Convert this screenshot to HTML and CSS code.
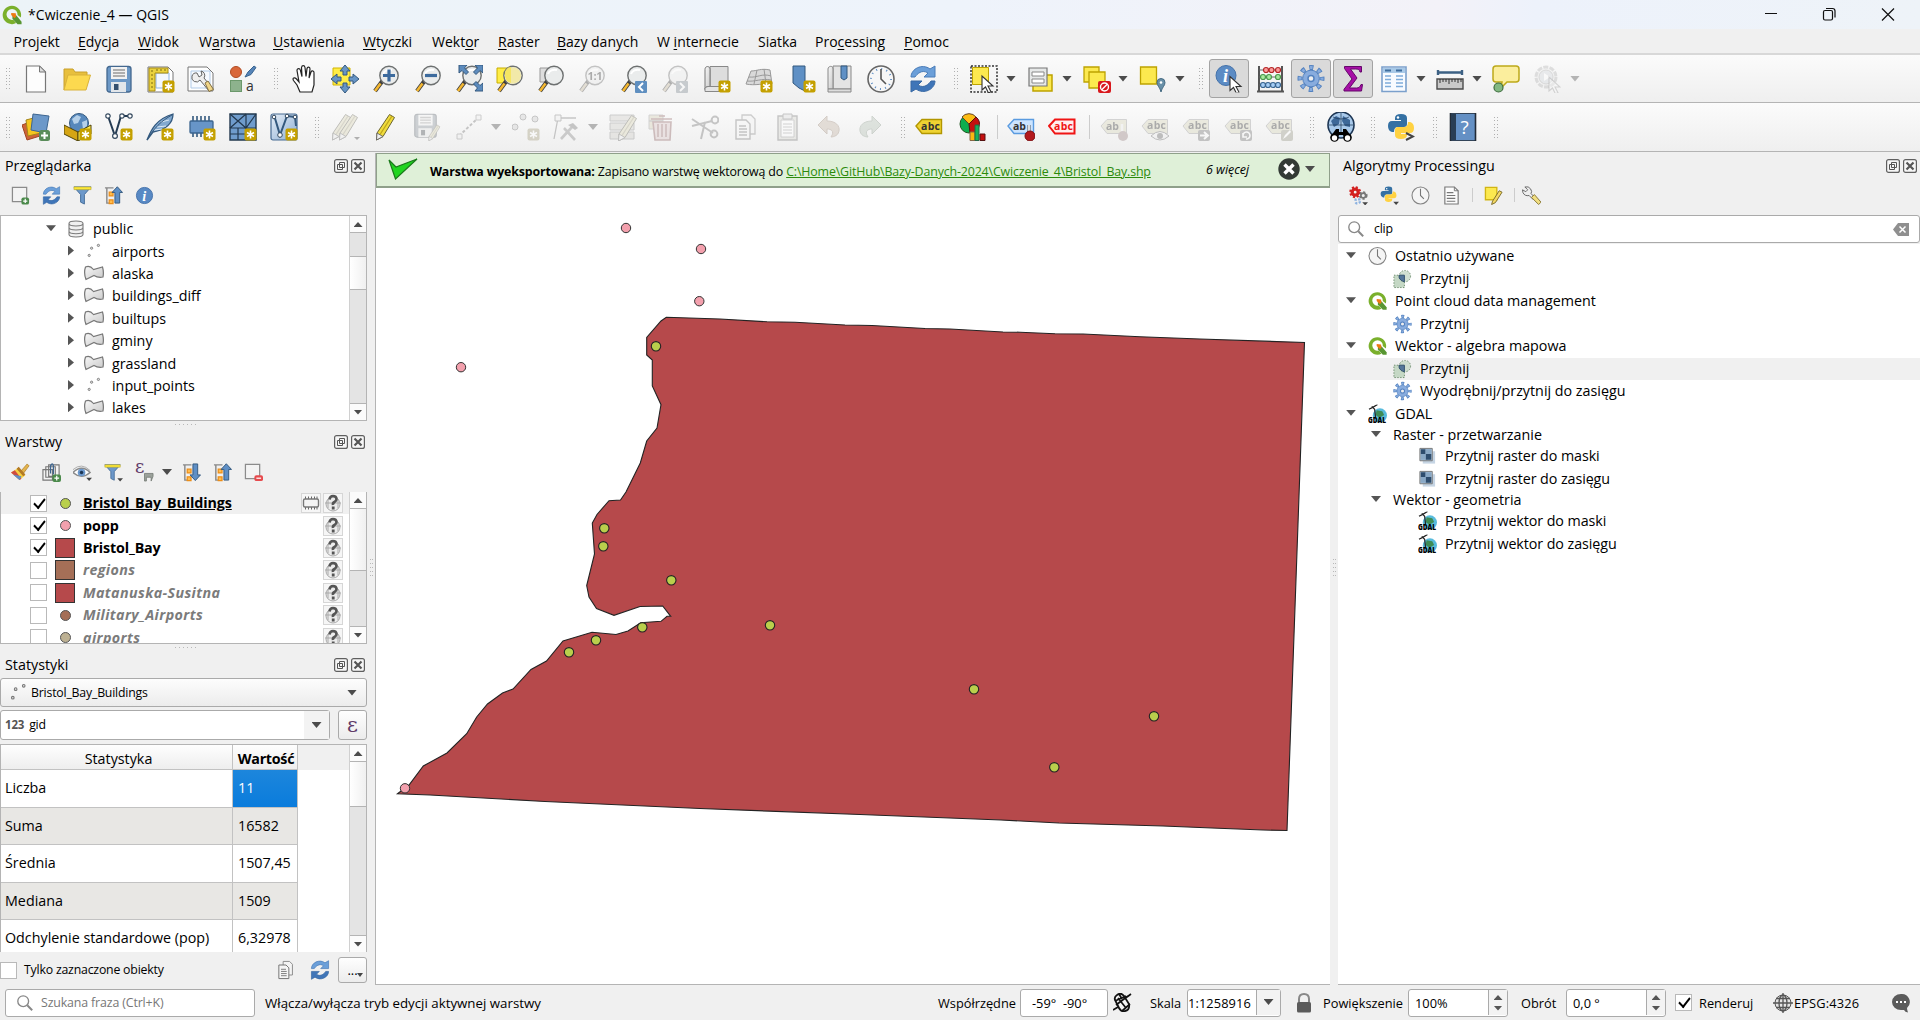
FILE: index.html
```html
<!DOCTYPE html>
<html lang="pl">
<head>
<meta charset="utf-8">
<title>*Cwiczenie_4 — QGIS</title>
<link rel="stylesheet" href="styles.css">
</head>
<body>
<svg width="0" height="0" class="defs">
<defs>
<linearGradient id="gg" x1="0" y1="0" x2="1" y2="1"><stop offset="0" stop-color="#f8f8f8"/><stop offset="1" stop-color="#c9c9c9"/></linearGradient>
<linearGradient id="gb" x1="0" y1="0" x2="1" y2="1"><stop offset="0" stop-color="#e6eef7"/><stop offset="1" stop-color="#8caed4"/></linearGradient>
<g id="bdg"><rect x="15.500" y="15.500" width="12" height="12" rx="2" fill="#c4a000"/><path d="M21.500 17.500v8M18 19.500l7 4M25 19.500l-7 4" stroke="#fff" stroke-width="1.600"/></g>
<g id="plus"><rect x="17" y="17" width="11" height="11" rx="2.500" fill="#5a8c5a"/><path d="M22.500 19v7M19 22.500h7" stroke="#fff" stroke-width="2"/></g>
<g id="handle"><path d="M11.500 14.500L3 26" stroke="#3f3f3f" stroke-width="4.200"/><path d="M8.500 18.500L3 26" stroke="#f5b831" stroke-width="2.600"/></g>
<g id="lens"><use href="#handle"/><circle cx="17" cy="10.500" r="9.200" fill="#eaecec" stroke="#6d7070" stroke-width="1.400"/><path d="M11 9a7 6 0 0 1 9-4" fill="none" stroke="#fff" stroke-width="2"/></g>
<g id="pencil"><path d="M5 20L17.500 1.500l5 3L11 23.500 4.500 27z" fill="#f0dc3c" stroke="#6b6430" stroke-width="1"/><path d="M8 21.500L20 3" stroke="#bfa51b" stroke-width="1.300"/><path d="M5 20l6 3.500-6.500 3.500z" fill="#eee" stroke="#666" stroke-width=".9"/></g>
<path id="tag" d="M1 13L7 6.500h19.500v14H7z"/>
<g id="cursor"><path d="M0 0v14l3.500-3 3 6 2.500-1.300-3-5.700h5z" fill="#fff" stroke="#333" stroke-width="1.100"/></g>
</defs>
<symbol id="q" viewBox="0 0 24 24"><path d="M12 1a11 11 0 1 0 5 20.700l-3.500-4A6.600 6.600 0 1 1 18.600 12l3.900 3A11 11 0 0 0 12 1z" fill="#7ab02c"/><path d="M12.500 12.500h4.800l6.200 7.500v3h-4.800l-6.200-6.500z" fill="#589632"/><path d="M11 9.500l5.500.5.500 4-2 2-4-4z" fill="#ee7913"/></symbol>
<symbol id="new" viewBox="0 0 28 28"><path d="M4.500 1h13l6 6v20h-19z" fill="#fdfdfd" stroke="#777" stroke-width="1.200"/><path d="M17.500 1v6h6z" fill="#ddd" stroke="#777"/></symbol>
<symbol id="open" viewBox="0 0 28 28"><path d="M1 25V4h9l2 3h12v4" fill="#e8bf3d" stroke="#c8a02c"/><path d="M1 25L5 10h22.500L23 25z" fill="#fcd94f" stroke="#d9b23a"/></symbol>
<symbol id="save" viewBox="0 0 28 28"><rect x="2" y="1.500" width="24" height="25.500" rx="2.500" fill="#6c98c6" stroke="#44688f" stroke-width="1.300"/><rect x="6" y="2" width="16" height="12" fill="#f2f2f2"/><path d="M8 5h12M8 8h12M8 11h12" stroke="#999" stroke-width="1.500"/><path d="M6 17h15v10H6z" fill="#e2e6ea"/><path d="M9 19h4.500v6H9z" fill="#34506f"/></symbol>
<symbol id="layout" viewBox="0 0 28 28"><path d="M1 2h20l5 5v20H1z" fill="#fff" stroke="#777"/><path d="M9 8h13v15H9z" fill="#f3f8ff" stroke="#8db5e3"/><path d="M2 3h19v5H8v18H2z" fill="#ead23f" stroke="#a78c14"/><path d="M4 6h2M4 10h2M4 14h2M4 18h2M4 22h2M10 4v2M14 4v2M18 4v2" stroke="#7d6c14"/><use href="#bdg"/></symbol>
<symbol id="mgr" viewBox="0 0 28 28"><path d="M1 2h19l6 6v18H1z" fill="#fff" stroke="#777"/><path d="M4 6h19v17H4z" fill="#f6faff" stroke="#b1cbe8"/><path d="M10 8a4.500 4.500 0 1 0 3 7l9 11 4-2-9-11a4.500 4.500 0 0 0-3-7l1 4-3 2z" fill="#eee" stroke="#555" stroke-width=".9"/><path d="M18 18l4 8.500 4.500-2L21 16z" fill="#f1d689" stroke="#847142"/></symbol>
<symbol id="style" viewBox="0 0 28 28"><circle cx="7" cy="7" r="5.500" fill="#d9673a" stroke="#b14b22"/><path d="M16 12l3-5 6-6 2 1.500-5 7z" fill="#5684b8" stroke="#39648f"/><rect x="1.500" y="15.500" width="11" height="11" fill="#8db28d" stroke="#6b986b"/></symbol>
<symbol id="hand" viewBox="0 0 28 28"><path d="M9 27L6 20 2.500 15.500c-1.500-2.500 1-3.500 3-1.500L8 17 6 5.500c0-2.500 3-2.500 3.500 0l1.500 6-.5-9c.5-2.500 3-2.500 3.500 0l1 9 1-8c.5-2 3-2 3 .5L18 13l2-6c1-2 3.500-1 3 1.500L23 20l-2 7z" fill="#fff" stroke="#222" stroke-width="1.200"/></symbol>
<symbol id="pan" viewBox="0 0 28 28"><path d="M2 3h17v17H2z" fill="#ffed46" stroke="#d2b500"/><path d="M14 0l5 6h-3v4h-4V6H9zM14 28l5-6h-3v-4h-4v4H9zM0 14l6-5v3h4v4H6v3zM28 14l-6-5v3h-4v4h4v3z" fill="#6795c5" stroke="#34597e"/></symbol>
<symbol id="zin" viewBox="0 0 28 28"><use href="#lens"/><path d="M17 4.500v12M11 10.500h12" stroke="#3c6a9d" stroke-width="3.200"/></symbol>
<symbol id="zout" viewBox="0 0 28 28"><use href="#lens"/><path d="M11 10.500h12" stroke="#3c6a9d" stroke-width="3.200"/></symbol>
<symbol id="zfull" viewBox="0 0 28 28"><use href="#lens"/><path d="M4 0h8L9.500 3l4 4-2.500 2.500-4-4L4 8zM28 0v8l-3-2.500-4 4L18.500 7l4-4L20 0zM28 26h-8l2.500-3-4-4 2.500-2.500 4 4L28 18z" fill="#5c8bbd" stroke="#34597e"/></symbol>
<symbol id="zsel" viewBox="0 0 28 28"><path d="M1 3h14v15H1z" fill="#ffed46" stroke="#c8ae00"/><use href="#lens"/><circle cx="17" cy="10.500" r="8.300" fill="#f2e9a8"/><path d="M9 7q2-5 6-5v16q-7-2-6-11z" fill="#f5e562"/></symbol>
<symbol id="zlay" viewBox="0 0 28 28"><path d="M3 3h13v14H3z" fill="#ddd" stroke="#999"/><use href="#lens"/></symbol>
<symbol id="z11" viewBox="0 0 28 28"><use href="#lens"/></symbol>
<symbol id="zprev" viewBox="0 0 28 28"><use href="#lens"/><rect x="15" y="16" width="12" height="12" rx="1" fill="#5f8fc0"/><path d="M23 18l-4 4 4 4" fill="none" stroke="#fff" stroke-width="2"/></symbol>
<symbol id="znext" viewBox="0 0 28 28"><use href="#lens"/><rect x="15" y="16" width="12" height="12" rx="1" fill="#5f8fc0"/><path d="M19 18l4 4-4 4" fill="none" stroke="#fff" stroke-width="2"/></symbol>
<symbol id="mapn" viewBox="0 0 28 28"><path d="M7 1.500h18v20H7z" fill="#ddd" stroke="#888"/><path d="M2 4.500c0-4 5-4 5 0v17H5c-2 0-3 1-3 3z" fill="url(#gg)" stroke="#777"/><path d="M2 26.500v-3q1-2 3-2h20v5z" fill="#e4e4e4" stroke="#888"/><use href="#bdg"/></symbol>
<symbol id="map3" viewBox="0 0 28 28"><path d="M1 19L6 6c6 0 10-3 19-1l2 14c-8-1-17 2-26 0zM4 12c8 1 13-4 22-1M12 5l-3 14M19 4l2 15M2 16c8 1 15-3 24-1" fill="#d9d9d9" stroke="#999"/><use href="#bdg"/></symbol>
<symbol id="bmn" viewBox="0 0 28 28"><path d="M5 1h12v25l-6-3-6-5z" fill="#5f90c5" stroke="#33597f"/><use href="#bdg"/></symbol>
<symbol id="bms" viewBox="0 0 28 28"><path d="M7 1h18v23H7z" fill="#e4e4e4" stroke="#888"/><path d="M2 4c0-3 5-4 5 0v20H2z" fill="url(#gg)" stroke="#888"/><path d="M2 24h23v3H2z" fill="#ddd" stroke="#888"/><path d="M15 1h6v12l-3 2-3-2z" fill="#5f90c5" stroke="#33597f"/></symbol>
<symbol id="clock" viewBox="0 0 28 28"><circle cx="14" cy="14" r="13" fill="#f7f7f7" stroke="#666" stroke-width="1.600"/><circle cx="14" cy="14" r="10" fill="none" stroke="#5c8cc4" stroke-width="2" stroke-dasharray="1 4.230"/><path d="M14 4v10l5 5" fill="none" stroke="#555" stroke-width="1.600"/></symbol>
<symbol id="clk2" viewBox="0 0 28 28"><circle cx="14" cy="14" r="12.500" fill="#f5f5f5" stroke="#858585" stroke-width="1.600"/><path d="M14 4v10l5 5" fill="none" stroke="#777" stroke-width="1.600"/></symbol>
<symbol id="ref" viewBox="0 0 28 28"><path d="M2 12C2 4 13-2 21 4l5-3v11H15l4-4C13 4 8 9 6 12z" fill="#6b9fd9" stroke="#4a7cb8"/><path d="M26 16c0 8-11 14-19 8l-5 3V16h11l-4 4c6 4 11-1 13-4z" fill="#3f75b8" stroke="#3869a4"/></symbol>
<symbol id="sel" viewBox="0 0 28 28"><path d="M1 1h26v26H1z" fill="none" stroke="#333" stroke-width="1.500" stroke-dasharray="2 1.500"/><path d="M2.500 2.500h16v17h-16z" fill="#fce94f" stroke="#bda300"/><use href="#cursor" x="12" y="11"/></symbol>
<symbol id="self" viewBox="0 0 28 28"><path d="M6 10h19v16H6z" fill="#fce94f" stroke="#bda300" stroke-width="1.500"/><path d="M2 3h18v18H2z" fill="#e6e8e8" stroke="#777" stroke-width="1.200"/><path d="M5 7h12v4H5zM5 14h12v4H5z" fill="#fff" stroke="#888"/></symbol>
<symbol id="desel" viewBox="0 0 28 28"><path d="M1 2h15v15H1z" fill="#fce94f" stroke="#bda300" stroke-width="1.300"/><path d="M6 7h16v16H6z" fill="#fce94f" stroke="#bda300" stroke-width="1.300"/><rect x="15" y="16" width="13" height="12" rx="2" fill="#d8181d"/><circle cx="21.500" cy="22" r="4" fill="none" stroke="#fff" stroke-width="1.400"/><path d="M18.500 25l6-6" stroke="#fff" stroke-width="1.400"/></symbol>
<symbol id="sloc" viewBox="0 0 28 28"><path d="M1.500 2h16v17h-16z" fill="#fce94f" stroke="#bda300" stroke-width="1.300"/><path d="M22 27c-1-5-4-6-4-9.500a4 4 0 0 1 8 0c0 3.500-3 4.500-4 9.500z" fill="#6990a8" stroke="#466b83"/><circle cx="22" cy="17.500" r="1.300" fill="#fff"/></symbol>
<symbol id="ident" viewBox="0 0 28 28"><circle cx="11" cy="11" r="10" fill="#5b8bc4" stroke="#4472aa"/></symbol>
<symbol id="abac" viewBox="0 0 28 28"><path d="M3 1v26M26 1v26M1 26.500h27" stroke="#555" stroke-width="2"/><path d="M3 5h23M3 12h23M3 20h23" stroke="#666"/><g stroke-width="1.200"><g fill="#fb9b9b" stroke="#b52626"><circle cx="10" cy="5" r="2.500"/><circle cx="15.500" cy="5" r="2.500"/><circle cx="22" cy="5" r="2.500"/></g><g fill="#a8eaa0" stroke="#4b994b"><circle cx="7" cy="12" r="2.500"/><circle cx="13" cy="12" r="2.500"/><circle cx="22" cy="12" r="2.500"/></g><g fill="#a5cdf5" stroke="#38648f"><circle cx="7" cy="20" r="2.500"/><circle cx="12" cy="20" r="2.500"/><circle cx="17" cy="20" r="2.500"/><circle cx="22" cy="20" r="2.500"/></g></g></symbol>
<symbol id="gear" viewBox="0 0 28 28"><circle cx="14" cy="14" r="11" fill="none" stroke="#5382c0" stroke-width="5" stroke-dasharray="4.200 4.440" stroke-dashoffset="2.100"/><circle cx="14" cy="14" r="11" fill="none" stroke="#88acde" stroke-width="3" stroke-dasharray="2.600 6.040" stroke-dashoffset="1.300"/><circle cx="14" cy="14" r="8.300" fill="#88acde" stroke="#5382c0"/><circle cx="14" cy="14" r="3" fill="#eee" stroke="#5382c0" stroke-width="1.500"/></symbol>
<symbol id="sig" viewBox="0 0 28 28"><path d="M5.500 2h17v5.500H21C20.500 5 19 4.500 16.500 4.500h-5L18 13.500l-7.500 10h7c2.500 0 3.500-1 4.500-3.500h1.500L22.500 26.500H5v-1.700L13 14.500 5.500 4z" fill="#a60fa6" stroke="#64086a"/></symbol>
<symbol id="tbl" viewBox="0 0 28 28"><path d="M2 2h24v24.500H2z" fill="#f8fbff" stroke="#7ba0cc" stroke-width="1.600"/><path d="M3 3h22v5H3z" fill="#a9cae8"/><path d="M5 5.500h6M16 5.500h6" stroke="#3e6d9d" stroke-width="2"/><path d="M5 11h6M5 14.500h6M5 18h6M5 21.500h6M16 11h7M16 14.500h7M16 18h7M16 21.500h7" stroke="#7eacda" stroke-width="1.500"/></symbol>
<symbol id="meas" viewBox="0 0 28 28"><path d="M3 7.500h22M2 5v5M26 5v5" stroke="#3d6184" stroke-width="2.400"/><path d="M1 14h26v10H1z" fill="#c9c9c9" stroke="#4c4c4c" stroke-width="1.400"/><path d="M4 14v4M7 14v3M10 14v3M13 14v5M16 14v3M19 14v3M22 14v4M25 14v3" stroke="#333"/></symbol>
<symbol id="tip" viewBox="0 0 28 28"><path d="M4 1h20q3 0 3 3v10q0 3-3 3h-9l-6 6 1-6H4q-3 0-3-3V4q0-3 3-3z" fill="#fbee9d" stroke="#bda91a" stroke-width="1.500"/><circle cx="6.500" cy="22.500" r="4.500" fill="#82b882" stroke="#3d6b3d" stroke-width="1.200"/></symbol>
<symbol id="act" viewBox="0 0 28 28"><circle cx="13" cy="12" r="10" fill="#ececec" stroke="#b5b5b5" stroke-width="3" stroke-dasharray="5 1.300"/><circle cx="13" cy="12" r="7" fill="#d2d6db" stroke="#aaa"/><path d="M11 8l6 4-6 4z" fill="#fff"/><use href="#cursor" x="16" y="12" opacity=".45"/></symbol>
<symbol id="ds" viewBox="0 0 28 28"><path d="M0 12l13-5 5 16-13 4z" fill="#ce6338" stroke="#a04623"/><path d="M4 7l15-4v17L6 23z" fill="#f5c61e" stroke="#a3851c"/><path d="M11 1l16 2-3 17-15-3z" fill="#6c98c9" stroke="#3d6590"/><use href="#plus"/></symbol>
<symbol id="gpk" viewBox="0 0 28 28"><circle cx="15" cy="10" r="9.500" fill="#5788bc" stroke="#33597f"/><path d="M8 6l5-4 4 2-3 6-4 1zM18 9l5-2v6l-4 3z" fill="#b5d0e9"/><path d="M0 12l14 7v9L0 21z" fill="#d5a514" stroke="#4e430a"/><path d="M14 19l13-7v9l-13 7z" fill="#ffe94a" stroke="#4e430a"/><use href="#bdg"/></symbol>
<symbol id="shp" viewBox="0 0 28 28"><path d="M3 3l7 20 6-20h8" fill="none" stroke="#243b53" stroke-width="2"/><g fill="#fff" stroke="#34495e" stroke-width="1.200"><circle cx="3" cy="3" r="2.200"/><circle cx="10" cy="23" r="2.400"/><circle cx="17" cy="3" r="2.200"/><circle cx="25" cy="3" r="2.200"/></g><use href="#bdg"/></symbol>
<symbol id="fea" viewBox="0 0 28 28"><path d="M1 27C5 17 10 6 27 1c0 9-7 16-20 18z" fill="#82a9d0" stroke="#34597e" stroke-width="1.300"/><path d="M11 14l9-1M15 9l8-2M8 17l8-1" stroke="#dce9f4" fill="none"/><path d="M1 27C8 15 15 8 26 2" stroke="#34597e" fill="none"/><use href="#bdg"/></symbol>
<symbol id="mem" viewBox="0 0 28 28"><path d="M5 3v21M9 3v21M13 3v21M17 3v21M21 3v21" stroke="#34597e" stroke-width="1.600"/><rect x="2" y="8" width="23" height="12" rx="1" fill="#6795c8" stroke="#3b648f" stroke-width="1.300"/><use href="#bdg"/></symbol>
<symbol id="mesh" viewBox="0 0 28 28"><path d="M1 1h26v26H1z" fill="#6f9ccc" stroke="#22384e" stroke-width="1.400"/><path d="M1 15h26M17 1v26M1 15L17 1M1 1l16 14L27 1M1 21h16M9 15v12" stroke="#22384e" stroke-width="1.200" fill="none"/><use href="#bdg"/></symbol>
<symbol id="vt" viewBox="0 0 28 28"><rect x="1" y="1" width="26" height="26" rx="2" fill="url(#gb)" stroke="#466a92" stroke-width="1.200"/><path d="M4 2l6 20 7-19 8 1 1 9" fill="none" stroke="#34597e" stroke-width="2"/><g fill="#fff" stroke="#34495e"><circle cx="4" cy="4" r="1.800"/><circle cx="10" cy="22" r="2.300"/><circle cx="17" cy="3" r="1.800"/><circle cx="25" cy="4" r="1.800"/></g><use href="#bdg"/></symbol>
<symbol id="pens" viewBox="0 0 28 28"><use href="#pencil" x="-4"/><use href="#pencil" x="3"/><path d="M22 24h6l-3 3z" fill="#444"/></symbol>
<symbol id="pen" viewBox="0 0 28 28"><use href="#pencil"/></symbol>
<symbol id="saved" viewBox="0 0 28 28"><use href="#save" width="25" height="25"/><g transform="translate(13 11) scale(.62)"><use href="#pencil"/></g></symbol>
<symbol id="line" viewBox="0 0 28 28"><path d="M4 23L24 4" stroke="#777" stroke-width="2" stroke-dasharray="3 2"/><path d="M2 21h5v5H2zM21 2h5v5h-5z" fill="#eee" stroke="#888"/></symbol>
<symbol id="pts" viewBox="0 0 28 28"><g fill="#ccc" stroke="#777"><circle cx="3" cy="14" r="3"/><circle cx="11" cy="4" r="3"/><circle cx="23" cy="6" r="3"/></g><use href="#bdg"/></symbol>
<symbol id="vert" viewBox="0 0 28 28"><path d="M6 5h18M6 5L2 26" stroke="#777" stroke-width="1.300"/><path d="M3 2h6v6H3z" fill="#eee" stroke="#777"/><path d="M9 26l11-12M12 15l11 12" stroke="#888" stroke-width="2.600"/><path d="M16 12l5-2 5 5-3 2z" fill="#777"/></symbol>
<symbol id="form" viewBox="0 0 28 28"><path d="M1 2h24v6H1zM1 10h24v7H1zM1 19h24v7H1z" fill="#d5cfb4" stroke="#888"/><g transform="translate(5 1)"><use href="#pencil"/></g></symbol>
<symbol id="del" viewBox="0 0 28 28"><path d="M1 2h14v6H1zM1 8h14v8H1z" fill="#d5cfb4" stroke="#999"/><path d="M5 9h18l-1 18H7zM3 6h21M11 3h6" fill="#d9c4c4" stroke="#8e6161" stroke-width="1.600"/><path d="M10 11v13M14 11v13M18 11v13" stroke="#8e6161" stroke-width="1.500"/></symbol>
<symbol id="cut" viewBox="0 0 28 28"><path d="M1 6l21 14M10 26L14 9" stroke="#777" stroke-width="2"/><path d="M1 13l20-5" stroke="#777" stroke-width="2"/><circle cx="24" cy="7" r="3.400" fill="none" stroke="#777" stroke-width="2"/><circle cx="23" cy="21" r="3.400" fill="none" stroke="#777" stroke-width="2"/></symbol>
<symbol id="copy" viewBox="0 0 28 28"><path d="M10 2h9l4 4v15H10z" fill="#f4f4f4" stroke="#888" stroke-width="1.300"/><path d="M4 7h10l4 4v15H4z" fill="#f6f6f6" stroke="#777" stroke-width="1.400"/><path d="M7 13h7M7 16h8M7 19h8M7 22h8" stroke="#777" stroke-width="1.300"/></symbol>
<symbol id="paste" viewBox="0 0 28 28"><path d="M4 3h19v24H4z" fill="#d6d6cf" stroke="#777" stroke-width="1.400"/><path d="M7 7h13v17H7z" fill="#fff" stroke="#999"/><path d="M9 1h9v5H9z" fill="#ddd" stroke="#777"/><path d="M9 11h9M9 14h9M9 17h9M9 20h9" stroke="#999"/></symbol>
<symbol id="undo" viewBox="0 0 28 28"><path d="M3 12l9-9v5c9 0 13 5 12 10-1 6-8 6-8 6 4-6 0-8-4-8v5z" fill="#c4b4a5" stroke="#9e8b7c"/></symbol>
<symbol id="redo" viewBox="0 0 28 28"><path d="M25 12l-9-9v5C7 8 3 13 4 18c1 6 8 6 8 6-4-6 0-8 4-8v5z" fill="#b6c2b6" stroke="#8f9c8f"/></symbol>
<symbol id="dia" viewBox="0 0 28 28"><circle cx="10" cy="11" r="9" fill="#0eae4e" stroke="#252"/><path d="M10 11L3 4a9 9 0 0 1 14 0z" fill="#fcbc13" stroke="#642"/><path d="M10 11l7-7a9 9 0 0 1-6 16z" fill="#c51010" stroke="#511"/><path d="M11 19h5v8.500h-5z" fill="#fbb710" stroke="#864"/><path d="M16 12h4v15.500h-4z" fill="#17b15c" stroke="#264"/><path d="M21 21h5v6.500h-5z" fill="#c51010" stroke="#511"/></symbol>
<symbol id="meta" viewBox="0 0 30 30"><circle cx="15" cy="13" r="13" fill="#a8c9ea" stroke="#1d3654" stroke-width="1.600"/><path d="M5 9l5-5 4 2-1 6-5 3zM17 4l7 4v7l-5-1-3-5z" fill="#3d6898"/><path d="M3 13h24M15 1v20M7 5q8 4 16 0" stroke="#1d3654" stroke-width=".7" fill="none"/><path d="M5 24l5-7h3v3h4v-3h3l5 7-6 3-2-4h-4l-2 4z"/><circle cx="8.500" cy="25.500" r="4.300"/><circle cx="21.500" cy="25.500" r="4.300"/><circle cx="8.500" cy="26" r="2.700" fill="#fff"/><circle cx="21.500" cy="26" r="2.700" fill="#fff"/></symbol>
<symbol id="py" viewBox="0 0 28 28"><path d="M8 5q0-4 6-4t6 4v6q0 3-3 3h-6q-4 0-4 5H5q-4-1-4-6t4-5h9V7H8z" fill="#3470a3"/><path d="M20 22q0 4-6 4t-6-4v-5q0-3 3-3h6q4 0 4-5h2q4 1 4 6t-4 5h-9v1h6z" fill="#ffd242"/><circle cx="11" cy="4.500" r="1.200" fill="#fff"/></symbol>
<symbol id="help" viewBox="0 0 28 28"><path d="M1.500 0h25v28h-25z" fill="#6490c4" stroke="#222b36" stroke-width="1.600"/><path d="M2 1h5v26H2z" fill="#293d53"/></symbol>
<symbol id="add" viewBox="0 0 20 20"><path d="M1.500 1.500h15v15h-15z" fill="#f3f3f3" stroke="#8b8b8b" stroke-width="1.300"/><rect x="11" y="12" width="8" height="7.500" rx="2" fill="#4b8a4b"/><path d="M15 13.500v4.500M12.800 15.800h4.400" stroke="#fff" stroke-width="1.300"/></symbol>
<symbol id="rem" viewBox="0 0 20 20"><path d="M1.500 1.500h15v15h-15z" fill="#f3f3f3" stroke="#8b8b8b" stroke-width="1.300"/><rect x="11" y="13" width="9" height="6" rx="2" fill="#e64a4d"/><path d="M13 16h5" stroke="#fff" stroke-width="1.300"/></symbol>
<symbol id="fil" viewBox="0 0 20 20"><path d="M1 1h18L12 9v10l-4-2V9z" fill="#6c98ca" stroke="#456d99"/><path d="M1 1h18v2.800H1z" fill="#fce838" stroke="#b4a120" stroke-width=".6"/></symbol>
<symbol id="fild" viewBox="0 0 20 20"><use href="#fil" width="18" height="20"/><path d="M14 16h6l-3 3.500z" fill="#444"/></symbol>
<symbol id="up" viewBox="0 0 20 20"><path d="M1 2h9M3 2v16h6" stroke="#888" stroke-width="1.500" fill="none"/><path d="M5.500 6.500h4v4h-4zM5.500 14.500h4v4h-4z" fill="#ffbd4e" stroke="#ed8e18" stroke-width="1.300"/><path d="M14 .8l5.500 6h-3V18h-5V6.800h-3z" fill="#5f8fc5" stroke="#34597e"/></symbol>
<symbol id="dn" viewBox="0 0 20 20"><path d="M1 2h9M3 2v16h6" stroke="#888" stroke-width="1.500" fill="none"/><path d="M5.500 6.500h4v4h-4zM5.500 14.500h4v4h-4z" fill="#ffbd4e" stroke="#ed8e18" stroke-width="1.300"/><path d="M14 18.500l5.500-6h-3V1h-5v11.500h-3z" fill="#5f8fc5" stroke="#34597e"/></symbol>
<symbol id="brush" viewBox="0 0 20 20"><path d="M0 10l8-5 7 8-6 5z" fill="#f7cf41"/><path d="M0 10l4-2.500 7 9L9 18z" fill="#cf4b41"/><path d="M2 12l9 2-2 4z" fill="#5f8fc5"/><path d="M10 9l7-8 2 2-6 8z" fill="#e3b44d" stroke="#a7761e" stroke-width=".7"/><path d="M7 5l7 8" stroke="#b37a24" stroke-width="3"/></symbol>
<symbol id="grp" viewBox="0 0 20 20"><path d="M1 7h10v11H1zM4 4h10v11H4zM7 2h11v12H7z" fill="#f3f3f3" stroke="#777" stroke-width="1.200"/><path d="M9 11V3q2-4 3 0v9" stroke="#3d6590" fill="none" stroke-width="1.300"/><rect x="11" y="12" width="9" height="8" rx="2" fill="#4b8a4b"/><path d="M15.500 13.500v5M13 16h5" stroke="#fff" stroke-width="1.300"/></symbol>
<symbol id="eye" viewBox="0 0 20 20"><path d="M0 10q9-9 18 0-9 8-18 0z" fill="#fff" stroke="#8a8a8a" stroke-width="1.500"/><path d="M0 7q9-8 18 1" fill="none" stroke="#aaa"/><circle cx="9" cy="10" r="4" fill="#6b98cc"/><circle cx="9" cy="10" r="1.800" fill="#1d3654"/><path d="M14 15.500h6l-3 3.500z" fill="#444"/></symbol>
<symbol id="float" viewBox="0 0 14 14"><rect x=".6" y=".6" width="12.800" height="12.800" rx="2" fill="#f6f6f6" stroke="#5f5f5f" stroke-width="1.200"/><path d="M5.500 3.500h5v5h-5zM3.500 5.500h5v5h-5z" fill="#f6f6f6" stroke="#555"/></symbol>
<symbol id="xx" viewBox="0 0 14 14"><rect x=".6" y=".6" width="12.800" height="12.800" rx="2" fill="#f6f6f6" stroke="#5f5f5f" stroke-width="1.200"/><path d="M3.500 3.500l7 7M10.500 3.500l-7 7" stroke="#555" stroke-width="2.200"/></symbol>
<symbol id="db" viewBox="0 0 18 18"><path d="M2 3.500v11q0 2.500 7 2.500t7-2.500v-11q0-2.500-7-2.500t-7 2.500q0 2.500 7 2.500t7-2.500M2 7.500q0 2.500 7 2.500t7-2.500M2 11.200q0 2.500 7 2.500t7-2.500" fill="#f0f0f0" stroke="#7b7b7b" stroke-width="1.100"/></symbol>
<symbol id="pt" viewBox="0 0 20 20"><g fill="#ddd" stroke="#777" stroke-width="1.100"><circle cx="4" cy="15.500" r="1.400"/><circle cx="7" cy="6.500" r="1.400"/><circle cx="15.500" cy="3" r="1.400"/></g></symbol>
<symbol id="pol" viewBox="0 0 20 16"><path d="M1.500 2q4.500-2 8 2.500l9-2.500q1.500 5 .5 10-5 1-9-1.500L2 14.500Q-.5 8 1.500 2z" fill="url(#gg)" stroke="#777" stroke-width="1.200"/></symbol>
<symbol id="gears" viewBox="0 0 20 20"><g fill="none" stroke-dasharray="2 1.770"><circle cx="6.500" cy="6.500" r="4.800" stroke="#d32020" stroke-width="3"/><circle cx="15" cy="10" r="3.300" stroke="#777" stroke-width="2.500"/><circle cx="9" cy="16" r="2.500" stroke="#8cb1e0" stroke-width="2.500"/></g><circle cx="6.500" cy="6.500" r="3.200" fill="none" stroke="#d32020" stroke-width="3.400"/><circle cx="15" cy="10" r="2.500" fill="none" stroke="#777" stroke-width="1.800"/><path d="M14 17h6l-3 3.500z" fill="#444"/></symbol>
<symbol id="pyd" viewBox="0 0 20 20"><use href="#py" width="18" height="18"/><path d="M14 16.500h6l-3 3.500z" fill="#444"/></symbol>
<symbol id="doc" viewBox="0 0 20 20"><path d="M3 1h10l4 4v14H3z" fill="#fcfcfc" stroke="#777" stroke-width="1.200"/><path d="M13 1v4h4" fill="none" stroke="#777"/><path d="M5 7h7M5 10h9M5 13h9M5 16h9" stroke="#777" stroke-width="1.200"/></symbol>
<symbol id="note" viewBox="0 0 20 20"><path d="M1.500 1.500h12v13h-12z" fill="#fce94f" stroke="#d1b514" stroke-width="1.400"/><path d="M9 16l7-11 3 1.500-7 11-4 2z" fill="#f3d763" stroke="#7b6d2a"/></symbol>
<symbol id="wr" viewBox="0 0 20 20"><path d="M3 1q4-1 6 2t.500 5l4 4-2 2-4-4Q3 11 1 7l-.500-3 3.500 2 2-2z" fill="#eee" stroke="#666"/><path d="M10 12l3-3 7 8-2.500 2.500z" fill="#f2df82" stroke="#887735"/></symbol>
<symbol id="mag" viewBox="0 0 20 20"><circle cx="8" cy="8" r="6" fill="none" stroke="#888" stroke-width="1.500"/><path d="M12.500 12.500L18 18" stroke="#888" stroke-width="2.200"/></symbol>
<symbol id="clip" viewBox="0 0 20 20"><path d="M1 6h11v13H1z" fill="#c5d8c5" stroke="#6f8d6f" stroke-dasharray="1.500 1.500"/><circle cx="12.500" cy="7" r="6" fill="#c5d8c5" fill-opacity=".8" stroke="#6f8d6f" stroke-dasharray="1.500 1.500"/><path d="M6.500 6H12v7q-4-1-5.500-4z" fill="#55779a" stroke="#31506f"/></symbol>
<symbol id="gdal" viewBox="0 0 20 20"><circle cx="12.500" cy="11.500" r="7.500" fill="#58bbdc"/><path d="M9 6l6 1 2 4-5 3-4-3z" fill="#3e8b55"/><path d="M1 5l4-2 5-3M4 2l3 3 1 9" stroke="#222" stroke-width="1.300" fill="none"/></symbol>
<symbol id="ras" viewBox="0 0 20 20"><path d="M5 5h13v13H5z" fill="#c6d5e4"/><path d="M2 2h13v13H2z" fill="#a9c1d8" stroke="#777"/><path d="M3 3h5v5H3zM8 8h6v6H8z" fill="#2e4d6e"/><path d="M8 3h6v5H8zM3 8h5v6H3z" fill="#8aa9c6"/></symbol>
<symbol id="crs" viewBox="0 0 20 20"><rect x=".5" y=".5" width="19" height="19" fill="#f6f6f6" stroke="#d6d6d6"/><circle cx="10" cy="11" r="7" fill="#ececec" stroke="#aaa"/><path d="M2 10h16M5 6v9M15 6v9" stroke="#aaa"/><path d="M6.500 6.500Q7 3 10 3q3.500 0 3.500 3 0 2-2 3t-1.500 3" fill="none" stroke="#555" stroke-width="2.600"/><path d="M8.800 13.500h2.800v3H8.800z" fill="#555"/></symbol>
<symbol id="chip" viewBox="0 0 20 20"><rect x=".5" y=".5" width="19" height="19" fill="#f6f6f6" stroke="#d6d6d6"/><path d="M4.500 3.500v13M7.500 3.500v13M10.500 3.500v13M13.500 3.500v13M16 3.500v13" stroke="#666"/><rect x="2.500" y="6" width="15" height="8" rx="1.500" fill="#f4f4f4" stroke="#777" stroke-width="1.400"/></symbol>
<symbol id="ok" viewBox="0 0 30 22"><path d="M1 2l7 7L29 1 7.500 21z" fill="#20d520" stroke="#1a7a1a" stroke-width="1.200"/></symbol>
<symbol id="lock" viewBox="0 0 18 20"><path d="M4 9V6q0-5 5-5t5 5v3" fill="none" stroke="#888" stroke-width="2"/><rect x="2" y="9" width="14" height="10.500" rx="1.500" fill="#5b5b5b"/></symbol>
<symbol id="mouse" viewBox="0 0 20 20"><path d="M4 2q4-3 7 1l5 8q1 6-4 7-4 1-6-3L2 7q-1-3 2-5z" fill="#f4f4f4" stroke="#111" stroke-width="1.800"/><path d="M2 8l11-5M6 1l3 5M3 12l12-9M14 4l4-3M5 5l8 10M0 17l5-3M9 18l8-7" stroke="#111" stroke-width="1.700"/></symbol>
<symbol id="globe" viewBox="0 0 20 20"><circle cx="10" cy="10" r="8" fill="#e4e4e4" stroke="#555"/><ellipse cx="10" cy="10" rx="4" ry="8" fill="none" stroke="#555" stroke-width="1.300"/><path d="M0 10h20M10 0v20M3 5.500h14M3 14.500h14" stroke="#555" stroke-width="1.300"/></symbol>
<symbol id="chat" viewBox="0 0 20 20"><path d="M10 1a9 8 0 0 0 0 16h3q1 2 4 2.500-1-3-1-4.500A8 8 0 0 0 10 1z" fill="#5b5b5b"/><path d="M5 9h2M9 9h2M13 9h2" stroke="#fff" stroke-width="2"/></symbol>
</svg>

<header class="title"><svg class="i20"><use href="#q"/></svg><span class="tt">*Cwiczenie_4 — QGIS</span>
<svg class="win" viewBox="0 0 150 29"><g fill="none" stroke="#111" stroke-width="1.200"><path d="M19 13.500h12M136 8.500l12 12M148 8.500l-12 12"/><rect x="77.500" y="10.500" width="9" height="9.500" rx="1.500"/><path d="M80 8.500h6.500q2.500 0 2.500 2.500v6.500"/></g></svg></header>
<nav class="menu"><span>Pro<u>j</u>ekt</span><span><u>E</u>dycja</span><span><u>W</u>idok</span><span>W<u>a</u>rstwa</span><span><u>U</u>stawienia</span><span><u>W</u>tyczki</span><span>Wekt<u>o</u>r</span><span><u>R</u>aster</span><span><u>B</u>azy danych</span><span>W <u>i</u>nternecie</span><span>Siatka</span><span>Pro<u>c</u>essing</span><span><u>P</u>omoc</span></nav>
<div class="bar one">
<i class="h"></i><svg><use href="#new"/></svg><svg><use href="#open"/></svg><svg><use href="#save"/></svg><svg><use href="#layout"/></svg><svg><use href="#mgr"/></svg><svg viewBox="0 0 28 28"><use href="#style"/><text x="17" y="26" font-size="14" class="svgt">a</text></svg><i class="h"></i><svg><use href="#hand"/></svg><svg><use href="#pan"/></svg><svg><use href="#zin"/></svg><svg><use href="#zout"/></svg><svg><use href="#zfull"/></svg><svg><use href="#zsel"/></svg><svg><use href="#zlay"/></svg><svg class="off gr" viewBox="0 0 28 28"><use href="#z11"/><text x="9.500" y="15" font-size="11" font-weight="bold" textLength="15" class="svgt">1:1</text></svg><svg><use href="#zprev"/></svg><svg class="off gr"><use href="#znext"/></svg><svg><use href="#mapn"/></svg><svg><use href="#map3"/></svg><svg><use href="#bmn"/></svg><svg><use href="#bms"/></svg><svg><use href="#clock"/></svg><svg><use href="#ref"/></svg><i class="h"></i><svg><use href="#sel"/></svg><i class="a"></i><svg><use href="#self"/></svg><i class="a"></i><svg><use href="#desel"/></svg><i class="a"></i><svg><use href="#sloc"/></svg><i class="a"></i><i class="h"></i><svg class="on" viewBox="0 0 28 28"><use href="#ident"/><text x="8" y="17.500" font-size="18" class="ital">i</text><use href="#cursor" x="15" y="12"/></svg><svg><use href="#abac"/></svg><svg class="on"><use href="#gear"/></svg><svg class="on"><use href="#sig"/></svg><svg><use href="#tbl"/></svg><i class="a"></i><svg><use href="#meas"/></svg><i class="a"></i><svg><use href="#tip"/></svg><svg class="off"><use href="#act"/></svg><i class="a off"></i>
</div>
<div class="bar two">
<i class="h"></i><svg><use href="#ds"/></svg><svg><use href="#gpk"/></svg><svg><use href="#shp"/></svg><svg><use href="#fea"/></svg><svg><use href="#mem"/></svg><svg><use href="#mesh"/></svg><svg><use href="#vt"/></svg><i class="h"></i><svg class="off gr"><use href="#pens"/></svg><svg><use href="#pen"/></svg><svg class="off gr"><use href="#saved"/></svg><svg class="off gr"><use href="#line"/></svg><i class="a off"></i><svg class="off gr"><use href="#pts"/></svg><svg class="off gr"><use href="#vert"/></svg><i class="a off"></i><svg class="off gr"><use href="#form"/></svg><svg class="off"><use href="#del"/></svg><svg class="off"><use href="#cut"/></svg><svg class="off"><use href="#copy"/></svg><svg class="off"><use href="#paste"/></svg><svg class="off"><use href="#undo"/></svg><svg class="off"><use href="#redo"/></svg><i class="h"></i>
<svg viewBox="0 0 28 28"><use href="#tag" fill="#efd332" stroke="#b29600" stroke-width="1.400"/><text x="6" y="17" font-size="10.500" font-weight="bold" textLength="19" class="svgt">abc</text></svg><svg><use href="#dia"/></svg><i class="s"></i>
<svg viewBox="0 0 28 28"><use href="#tag" fill="#cce4ff" stroke="#5a9be0" stroke-width="1.400"/><text x="6" y="17" font-size="10.500" font-weight="bold" class="svgt">ab</text><path d="M22 22V12" stroke="#555" stroke-width="3"/><path d="M22 22V12" stroke="#eee" stroke-width="1.800"/><circle cx="23" cy="23" r="5" fill="#b3191e" stroke="#7a1013"/></svg>
<svg viewBox="0 0 28 28"><use href="#tag" fill="#fee" stroke="#f01515" stroke-width="2"/><text x="6" y="17" font-size="10.500" font-weight="bold" textLength="19" class="svgt red">abc</text></svg><i class="s"></i>
<svg class="off" viewBox="0 0 28 28"><use href="#tag" fill="#d7d5b9" stroke="#999"/><text x="6" y="17" font-size="10.500" font-weight="bold" class="svgt">ab</text><path d="M22 20v-9" stroke="#eee" stroke-width="2.500"/><circle cx="23" cy="23" r="5" fill="#9b8585"/></svg>
<svg class="off" viewBox="0 0 28 28"><use href="#tag" fill="#d7d5b9" stroke="#999"/><text x="6" y="16" font-size="10.500" font-weight="bold" textLength="19" class="svgt">abc</text><path d="M10 23q9-9 18 0-9 8-18 0z" fill="#eee" stroke="#666"/><circle cx="19" cy="23" r="3" fill="#666"/></svg>
<svg class="off" viewBox="0 0 28 28"><use href="#tag" fill="#d7d5b9" stroke="#999"/><text x="6" y="16" font-size="10.500" font-weight="bold" textLength="19" class="svgt">abc</text><rect x="16" y="17" width="12" height="11" rx="2" fill="#777"/><path d="M18 22.500h7M22 19l4 3.500-4 3.500" stroke="#fff" stroke-width="2" fill="none"/></svg>
<svg class="off" viewBox="0 0 28 28"><use href="#tag" fill="#d7d5b9" stroke="#999"/><text x="6" y="16" font-size="10.500" font-weight="bold" textLength="19" class="svgt">abc</text><rect x="16" y="17" width="12" height="11" rx="2" fill="#777"/><path d="M19 23a3.500 3.500 0 1 1 3 3M19 20v4h4" stroke="#fff" stroke-width="1.600" fill="none"/></svg>
<svg class="off" viewBox="0 0 28 28"><use href="#tag" fill="#d7d5b9" stroke="#999"/><text x="6" y="16" font-size="10.500" font-weight="bold" textLength="19" class="svgt">abc</text><rect x="16" y="17" width="12" height="11" rx="2" fill="#998"/><path d="M18 26l2-4 5-5 1 2-5 5z" fill="#fff"/></svg>
<i class="h"></i><svg class="big"><use href="#meta"/></svg><i class="h"></i><svg viewBox="0 0 28 28"><use href="#py"/><path d="M19 20l7 3.500-7 3.500" fill="none" stroke="#444" stroke-width="2"/></svg><i class="h"></i><svg viewBox="0 0 28 28"><use href="#help"/><text x="11.500" y="21" font-size="19" class="svgt wh">?</text></svg><i class="h"></i>
</div>

<main>
<aside class="left">
<section class="browser">
<h2><span>Przeglądarka</span><svg><use href="#float"/></svg><svg><use href="#xx"/></svg></h2>
<div class="tools"><svg><use href="#add"/></svg><svg><use href="#ref"/></svg><svg><use href="#fil"/></svg><svg><use href="#up"/></svg><svg viewBox="0 0 20 20"><circle cx="10" cy="10" r="8.500" fill="#5889c4" stroke="#4472ab"/><text x="7.500" y="15.500" font-size="15" class="ital">i</text></svg></div>
<div class="box">
<div class="rows">
<p class="root"><b class="ar dn"></b><svg><use href="#db"/></svg>public</p>
<p><b class="ar"></b><svg><use href="#pt"/></svg>airports</p>
<p><b class="ar"></b><svg><use href="#pol"/></svg>alaska</p>
<p><b class="ar"></b><svg><use href="#pol"/></svg>buildings_diff</p>
<p><b class="ar"></b><svg><use href="#pol"/></svg>builtups</p>
<p><b class="ar"></b><svg><use href="#pol"/></svg>gminy</p>
<p><b class="ar"></b><svg><use href="#pol"/></svg>grassland</p>
<p><b class="ar"></b><svg><use href="#pt"/></svg>input_points</p>
<p><b class="ar"></b><svg><use href="#pol"/></svg>lakes</p>
</div>
<div class="sb s1"><i class="up"></i><i class="thumb"></i><i class="down"></i></div>
</div>
</section>
<div class="split"></div>
<section class="layers">
<h2><span>Warstwy</span><svg><use href="#float"/></svg><svg><use href="#xx"/></svg></h2>
<div class="tools lt"><svg><use href="#brush"/></svg><svg><use href="#grp"/></svg><svg><use href="#eye"/></svg><svg><use href="#fild"/></svg><svg viewBox="0 0 20 20"><text x="0" y="11" font-size="19" class="eps">ε</text><path d="M10 11h9v3l-2 5v-4h-5v4h-2z" fill="#9ba19b" stroke="#6f756f" stroke-width=".8"/></svg><i class="a"></i><svg><use href="#dn"/></svg><svg><use href="#up"/></svg><svg><use href="#rem"/></svg></div>
<div class="box">
<div class="rows">
<p class="cur"><i class="cb ck"></i><i class="dot lime"></i><span class="act">Bristol_Bay_Buildings</span><svg><use href="#chip"/></svg><svg><use href="#crs"/></svg></p>
<p><i class="cb ck"></i><i class="dot pink"></i><span>popp</span><svg><use href="#crs"/></svg></p>
<p><i class="cb ck"></i><i class="sw red"></i><span>Bristol_Bay</span><svg><use href="#crs"/></svg></p>
<p class="hid"><i class="cb"></i><i class="sw brown"></i><span>regions</span><svg><use href="#crs"/></svg></p>
<p class="hid"><i class="cb"></i><i class="sw red"></i><span>Matanuska-Susitna</span><svg><use href="#crs"/></svg></p>
<p class="hid"><i class="cb"></i><i class="dot brown"></i><span>Military_Airports</span><svg><use href="#crs"/></svg></p>
<p class="hid"><i class="cb"></i><i class="dot tan"></i><span>airports</span><svg><use href="#crs"/></svg></p>
</div>
<div class="sb s2"><i class="up"></i><i class="thumb"></i><i class="down"></i></div>
</div>
</section>
<div class="split"></div>
<section class="stats">
<h2><span>Statystyki</span><svg><use href="#float"/></svg><svg><use href="#xx"/></svg></h2>
<div class="combo"><svg><use href="#pt"/></svg><span>Bristol_Bay_Buildings</span><i class="a"></i></div>
<div class="field"><div class="edit"><strong>123</strong><span>gid</span><i class="a"></i></div><button class="ebtn">ε</button></div>
<div class="tblbox">
<div class="table"><b>Statystyka</b><b class="v">Wartość</b>
<span>Liczba</span><span class="v selv">11</span>
<span class="alt">Suma</span><span class="v alt">16582</span>
<span>Średnia</span><span class="v">1507,45</span>
<span class="alt">Mediana</span><span class="v alt">1509</span>
<span>Odchylenie standardowe (pop)</span><span class="v">6,32978</span></div>
<div class="sb s3"><i class="up"></i><i class="thumb"></i><i class="down"></i></div>
</div>
<div class="foot"><i class="cb"></i><span>Tylko zaznaczone obiekty</span><svg><use href="#copy"/></svg><svg><use href="#ref"/></svg><button>...<i></i></button></div>
</section>
</aside>
<div class="vs"></div>
<div class="canvas">
<div class="msg"><svg><use href="#ok"/></svg><span class="mt"><b>Warstwa wyeksportowana:</b> Zapisano warstwę wektorową do <u>C:\Home\GitHub\Bazy-Danych-2024\Cwiczenie_4\Bristol_Bay.shp</u></span><em>6 więcej</em><svg class="cl" viewBox="0 0 22 22"><circle cx="11" cy="11" r="10.700" fill="#333a35"/><path d="M6.500 6.500l9 9M15.500 6.500l-9 9" stroke="#fff" stroke-width="3.400"/></svg><i class="a"></i></div>
<svg class="map" viewBox="376 188 954 795">
<path d="M397.500 793.700L409 785 423.300 766 447 753 466.700 733.700 476.700 717 487.500 704 502.500 693 513 689 531 669.500 546.500 661 563 641 592 632.300 616 634.500 628 631 640.700 622.700 661 621.300 667 616.300 670.700 616.300 662.700 606 640 606.500 614 615.300 596.500 608.500 589 597 586.700 585.500 594.500 554 592.300 523 597 514.500 609 500.700 620.500 500 626 492 640.300 463 646.700 441 657 428 661 404.700 652.300 386 652.300 360 646.700 355 646.700 337.500 661 321 666.300 317.200 720 319 767 321.800 795 322.300 845 325 872 325.500 925 328.500 950 329 1003 332 1020 332.200 1055 333.700 1083 334 1140 336.800 1200 339 1304.500 342.500 1287 830.500 1263 830 1212 828 1163 826 1059 823 1001 820 860 814.500 700 808.500 545 801.500 430 795z" fill="#b6494b" stroke="#232323" stroke-width="1.100"/>
<g fill="#f3a0ad" stroke="#333" stroke-width="1"><circle cx="626" cy="228" r="4.700"/><circle cx="701" cy="249" r="4.700"/><circle cx="699.300" cy="301.200" r="4.700"/><circle cx="461" cy="367.200" r="4.700"/><circle cx="405" cy="788.300" r="4.700"/></g>
<g fill="#b9cf4c" stroke="#232323" stroke-width="1.100"><circle cx="656" cy="346.300" r="4.700"/><circle cx="604.300" cy="528.300" r="4.700"/><circle cx="603.300" cy="546.300" r="4.700"/><circle cx="671.300" cy="580.300" r="4.700"/><circle cx="770" cy="625.300" r="4.700"/><circle cx="642.300" cy="627.300" r="4.700"/><circle cx="596" cy="640.300" r="4.700"/><circle cx="569" cy="652.300" r="4.700"/><circle cx="974" cy="689.300" r="4.700"/><circle cx="1154" cy="716.300" r="4.700"/><circle cx="1054.300" cy="767.300" r="4.700"/></g>
</svg>
</div>
<div class="vs"></div>
<aside class="right">
<h2><span>Algorytmy Processingu</span><svg><use href="#float"/></svg><svg><use href="#xx"/></svg></h2>
<div class="tools rt"><svg><use href="#gears"/></svg><svg><use href="#pyd"/></svg><svg><use href="#clk2"/></svg><svg><use href="#doc"/></svg><i class="s"></i><svg><use href="#note"/></svg><i class="s"></i><svg><use href="#wr"/></svg></div>
<div class="search"><svg class="i18"><use href="#mag"/></svg><span>clip</span><svg class="clr" viewBox="0 0 16 13"><path d="M0 6.500L5 0h11v13H5z" fill="#8f8f8f"/><path d="M6.500 3.500l6 6M12.500 3.500l-6 6" stroke="#fff" stroke-width="1.500"/></svg></div>
<div class="algs">
<p><b class="ar dn"></b><svg><use href="#clk2"/></svg>Ostatnio używane</p>
<p class="l1"><svg><use href="#clip"/></svg>Przytnij</p>
<p><b class="ar dn"></b><svg><use href="#q"/></svg>Point cloud data management</p>
<p class="l1"><svg><use href="#gear"/></svg>Przytnij</p>
<p><b class="ar dn"></b><svg><use href="#q"/></svg>Wektor - algebra mapowa</p>
<p class="l1 cur"><svg><use href="#clip"/></svg>Przytnij</p>
<p class="l1"><svg><use href="#gear"/></svg>Wyodrębnij/przytnij do zasięgu</p>
<p><b class="ar dn"></b><svg viewBox="0 0 20 20"><use href="#gdal"/><text x="0" y="19.500" font-size="9.500" textLength="19" lengthAdjust="spacingAndGlyphs" class="svgt gd">GDAL</text></svg>GDAL</p>
<p class="cat"><b class="ar dn"></b>Raster - przetwarzanie</p>
<p class="l2"><svg><use href="#ras"/></svg>Przytnij raster do maski</p>
<p class="l2"><svg><use href="#ras"/></svg>Przytnij raster do zasięgu</p>
<p class="cat"><b class="ar dn"></b>Wektor - geometria</p>
<p class="l2"><svg viewBox="0 0 20 20"><use href="#gdal"/><text x="0" y="19.500" font-size="9.500" textLength="19" lengthAdjust="spacingAndGlyphs" class="svgt gd">GDAL</text></svg>Przytnij wektor do maski</p>
<p class="l2"><svg viewBox="0 0 20 20"><use href="#gdal"/><text x="0" y="19.500" font-size="9.500" textLength="19" lengthAdjust="spacingAndGlyphs" class="svgt gd">GDAL</text></svg>Przytnij wektor do zasięgu</p>
</div>
</aside>
</main>
<footer>
<div class="loc"><svg class="i18"><use href="#mag"/></svg><span>Szukana fraza (Ctrl+K)</span></div>
<span class="hint">Włącza/wyłącza tryb edycji aktywnej warstwy</span>
<span class="w1">Współrzędne</span><div class="inp c1">-59°&nbsp; -90°</div><svg class="i20 mo"><use href="#mouse"/></svg>
<span class="w2">Skala</span><div class="inp c2"><span>1:1258916</span><i class="a"></i></div><svg class="lk"><use href="#lock"/></svg>
<span class="w3">Powiększenie</span><div class="inp c3"><span>100%</span><em class="spin"></em></div>
<span class="w4">Obrót</span><div class="inp c3"><span>0,0 °</span><em class="spin"></em></div>
<i class="cb ck"></i><span class="w5">Renderuj</span><svg class="i20 gl"><use href="#globe"/></svg><span class="w6">EPSG:4326</span><svg class="i20 ch"><use href="#chat"/></svg>
</footer>
</body>
</html>
```
FILE: styles.css
```css
* { box-sizing: border-box; }
body { margin: 0; width: 1920px; height: 1020px; overflow: hidden; display: flex; flex-direction: column; background: #f0f0f0; color: #000; font: 14.3px/22px "Open Sans", "Noto Sans", sans-serif; }
.defs { position: absolute; }
svg { display: block; flex: none; }
p, h2 { margin: 0; font-weight: normal; font-size: inherit; white-space: nowrap; }
i, em { font-style: normal; }
.svgt { font-family: "Open Sans", sans-serif; fill: #333; }
.svgt.red { fill: #f01515; }
.svgt.wh { fill: #fff; }
.svgt.gd { fill: #000; font-weight: 800; }
.ital { font-family: "Liberation Serif", serif; font-style: italic; font-weight: bold; fill: #fff; }
.eps { font-family: "DejaVu Serif", serif; fill: #5f3a68; }
.i20 { width: 20px; height: 20px; }
.i18 { width: 18px; height: 18px; }

.title { height: 29px; flex: none; display: flex; align-items: center; padding-left: 2px; background: linear-gradient(90deg, #ecf3f8, #eef3fb 50%, #f3f2f8 75%, #edf2fb 80%, #eef3f8); font-size: 14px; }
.tt { margin-left: 6px; letter-spacing: .05px; }
.win { width: 150px; height: 29px; margin-left: auto; margin-right: 24px; }
.menu { height: 26px; flex: none; display: grid; grid-template-columns: 64.5px 60px 61px 74px 90px 69px 66px 59px 100px 101px 57px 89px 60px; padding-left: 13.5px; border-bottom: 2px solid #d8d8d8; white-space: nowrap; line-height: 26px; font-size: 14px; }
.menu u { text-underline-offset: 2px; }
.bar { flex: none; display: grid; align-items: center; background: linear-gradient(#fbfbfb, #efefef); border-bottom: 1px solid #b4b4b4; }
.bar svg { width: 28px; height: 28px; }
.bar svg.big { width: 30px; height: 30px; }
.one { height: 48px; grid-template-columns: 22px 41px 42px 42px 40px 42px 33px 29px 40px 41px 42px 41px 41px 41px 41px 42px 41px 42px 42px 43px 38px 41px 42px 33px 28px 27px 30px 26px 30px 26px 30px 27px 21px 28px 41px 41px 42px 41px 27px 29px 27px 29px 41px 28px 28px; }
.two { height: 49px; grid-template-columns: 22px 42px 41px 41px 42px 41px 41px 33px 29px 40px 41px 42px 27px 30px 40px 27px 30px 39px 43px 41px 42px 41px 41px 33px 26px 44px 24px 24px 41px 27px 25px 41px 41px 42px 41px 33px 28px 33px 28px 34px 28px 33px 28px; }
.bar svg.on { width: 40px; height: 39px; margin: 0 -6px; padding: 4.500px 5px; border: 1px solid #a3a3a3; border-radius: 3px; background: #dadada; }
.off { opacity: .38; }
.gr { filter: grayscale(.8); }
.h { width: 28px; height: 21px; display: flex; justify-content: center; gap: 2px; }
.h::before, .h::after { content: ""; width: 1px; height: 21px; background: repeating-linear-gradient(#b0b0b0 0 1px, transparent 1px 3.300px); }
.h:first-child { width: 16px; }
.s { width: 28px; height: 24px; background: linear-gradient(#ccc, #ccc) center / 1px 100% no-repeat; }
.a { width: 28px; height: 6px; display: block; flex: none; }
.a::after { content: ""; display: block; margin: 0 auto; width: 10px; height: 6px; background: #4c4c4c; clip-path: polygon(0 0, 100% 0, 50% 100%); }

main { flex: 1; display: flex; min-height: 0; padding-top: 1px; }
.left { width: 367px; display: flex; flex-direction: column; }
h2 { height: 26px; padding: 0 2px 1px 5px; display: flex; align-items: center; gap: 3px; line-height: 26px; }
h2 svg { width: 14px; height: 14px; }
h2 span { margin-right: auto; }
.tools { height: 36px; display: flex; align-items: center; gap: 12px; padding: 0 0 4px 11px; }
.tools svg { width: 19px; height: 19px; }
.box { display: flex; border: 1px solid #b4b4b4; background: #fff; overflow: hidden; }
.rows { flex: 1; min-width: 0; }
.browser .box { height: 206px; }
.browser .rows { padding-top: 2px; }
.browser p { height: 22.4px; display: flex; align-items: center; padding-left: 67px; }
.browser p svg { width: 20px; height: 16px; margin: -2px 8px 0 10px; }
.browser p.root { padding-left: 45px; }
.browser p.root svg { width: 18px; height: 18px; margin: 0 8px 0 11px; }
.ar { width: 6px; height: 10px; background: #555; clip-path: polygon(0 0, 100% 50%, 0 100%); flex: none; }
.ar.dn { width: 10px; height: 6px; clip-path: polygon(0 0, 100% 0, 50% 100%); }
.browser .ar { margin-top: -2px; }
.sb { width: 17px; flex: none; display: flex; flex-direction: column; background: #e4e4e4; border-left: 1px solid #d0d0d0; }
.sb i { display: block; background: #fbfbfb; border: 0 solid #b4b4b4; }
.sb .up, .sb .down { height: 17px; display: grid; place-items: center; }
.sb .up { border-bottom-width: 1px; }
.sb .down { border-top-width: 1px; margin-top: auto; }
.sb .up::after, .sb .down::after { content: ""; width: 9px; height: 5px; background: #4c4c4c; clip-path: polygon(0 0, 100% 0, 50% 100%); }
.sb .up::after { transform: scaleY(-1); }
.sb .thumb { border-width: 1px 0; background: linear-gradient(90deg, #fff, #f0f0f0); }
.s1 .thumb { margin-top: 23px; height: 34px; }
.s2 .thumb { height: 62px; border-top: 0; }
.s3 .thumb { height: 45px; border-top: 0; }
.split { height: 8px; flex: none; padding: 3px 0 0 175px; }
.split::after { content: ""; display: block; width: 21px; height: 1px; background: repeating-linear-gradient(90deg, #b8b8b8 0 1px, transparent 1px 4px); }
.layers { height: 215px; }
.tools.lt { height: 37px; padding-bottom: 3px; }
.lt .a { width: 14px; margin: 0 -3px 0 -6px; }
.lt .a + svg { margin-left: -1px; }
.layers .box { height: 152px; border-top: 0; }
.layers p { height: 22.4px; display: flex; align-items: center; padding: 0 6px 0 29px; font-weight: bold; }
.layers p svg { width: 20px; height: 20px; margin-left: 2px; }
.layers p.cur { background: #f0f0f0; }
.layers .act { text-decoration: underline; }
.cb { width: 17px; height: 17px; background: #fff; border: 1px solid #b9b9b9; display: block; flex: none; }
.ck::after { content: ""; display: block; width: 5px; height: 10px; margin: 0 0 0 5px; border: solid #000; border-width: 0 2px 2px 0; transform: rotate(38deg) skewY(8deg); }
.dot { width: 11px; height: 11px; border-radius: 50%; border: 1px solid #555; margin: 0 5px 0 13px; flex: none; }
.dot + span { margin: 0 auto 0 7px; letter-spacing: -.1px; }
.sw { width: 20px; height: 20px; border: 1px solid #333; margin-left: 8px; flex: none; }
.sw + span { margin: 0 auto 0 8px; letter-spacing: -.15px; }
.layers .hid span { color: #7b7b7b; font-style: italic; letter-spacing: .38px; }
.lime { background: #b9cf4c; } .pink { background: #f3a0ad; } .red { background: #b6494b; } .brown { background: #a56f57; } .tan { background: #bdb193; }

.stats { font-size: 12.3px; letter-spacing: -.2px; }
.stats h2 { font-size: 14.3px; letter-spacing: 0; }
.combo { height: 29px; border: 1px solid #aaa; border-radius: 3px; display: flex; align-items: center; background: linear-gradient(#fdfdfd, #ececec); padding-left: 8px; }
.combo svg { width: 19px; height: 19px; margin-right: 3px; }
.combo .a { margin-left: auto; }
.field { height: 30px; margin-top: 3px; display: flex; justify-content: space-between; }
.edit { width: 330px; border: 1px solid #aaa; border-radius: 3px; background: #fff; display: flex; align-items: center; padding-left: 4px; }
.edit strong { font-size: 11.500px; color: #555; margin-right: 5px; }
.edit .a { margin-left: auto; width: 25px; height: 28px; padding-top: 11px; background: #f3f3f3; }
button { font: 13px "Open Sans", sans-serif; border: 1px solid #aaa; border-radius: 3px; background: linear-gradient(#fefefe, #ececec); padding: 0; }
.ebtn { width: 29px; font: 21px/22px "DejaVu Serif", serif; color: #5f3a68; }
.tblbox { height: 208px; margin-top: 4px; display: flex; border: 1px solid #b4b4b4; border-bottom: 0; overflow: hidden; background: linear-gradient(#f0f0f0 25px, #fff 25px); font-size: 14.3px; letter-spacing: 0; }
.table { flex: none; width: 297px; display: grid; grid-template-columns: 232px 65px; grid-template-rows: 25px 37.500px 37.500px 37.500px 37.500px 37.500px; background: #fff; }
.tblbox .sb { margin-left: auto; }
.table span, .table b { padding-left: 4px; border: solid #c2c2c2; border-width: 0 1px 1px 0; display: flex; align-items: center; white-space: nowrap; }
.table span.v { padding-left: 5px; }
.table b { background: linear-gradient(#fefefe, #eee); font-weight: normal; justify-content: center; padding-top: 3px; }
.table b.v { font-weight: bold; padding-left: 2px; letter-spacing: -.3px; }
.table .alt { background: #e8e7e4; }
.table .selv { background: linear-gradient(#1d86dc, #0a7cdc); color: #fff; }
.foot { height: 33px; display: flex; align-items: center; padding-top: 3px; }
.foot span { margin: 0 auto 0 7px; }
.foot svg { width: 20px; height: 20px; margin-right: 14px; }
.foot svg + svg { margin-right: 8px; }
.foot button { width: 29px; height: 26px; position: relative; }
.foot button i { position: absolute; right: 3px; bottom: 5px; width: 6px; height: 4px; background: #444; clip-path: polygon(0 0, 100% 0, 50% 100%); }

.vs { width: 8px; display: flex; align-items: center; justify-content: center; gap: 1px; padding-bottom: 0; }
.vs::before, .vs::after { content: ""; width: 1px; height: 20px; background: repeating-linear-gradient(#b8b8b8 0 1px, transparent 1px 4px); }
.canvas { width: 955px; height: 832px; border: solid #b4b4b4; border-width: 0 0 1px 1px; background: #fff; display: flex; flex-direction: column; }
.msg { height: 35px; flex: none; background: #dff0d8; border: 1px solid #8fa08a; border-bottom-width: 2px; display: flex; align-items: center; font-size: 12.4px; white-space: nowrap; }
.msg > svg { width: 30px; height: 22px; margin: -2px 12px 0 11px; }
.mt { margin-top: 4px; width: 776px; letter-spacing: -.15px; }
.msg u { color: #2b8a0b; }
.msg em { font-style: italic; width: 60px; }
.msg .cl { width: 22px; margin: -3px 0 0 12px; }
.msg .a { width: 20px; margin-top: -2px; }
.map { width: 954px; height: 795px; }

.right { width: 582px; display: flex; flex-direction: column; height: 832px; }
.right h2 { padding-right: 3px; }
.rt { padding-left: 11px; gap: 12px; }
.rt .s { width: 1px; height: 14px; margin: 0 -1px; }
.rt .s + svg:last-child { margin-left: -4px; }
.search { height: 28px; margin-bottom: 1px; border: 1.500px solid #aaa; border-radius: 3px; background: #fff; display: flex; align-items: center; padding: 0 10px 0 8px; font-size: 12.3px; letter-spacing: -.2px; }
.search span { margin: 0 auto 0 9px; }
.clr { width: 16px; height: 13px; }
.algs { flex: 1; background: #fff; border-bottom: 1px solid #b4b4b4; padding-top: 1px; }
.algs p { height: 22.500px; display: flex; align-items: center; padding-left: 8px; }
.algs svg { width: 19px; height: 20px; margin: 0 8px 0 12px; }
.algs p.l1 { padding-left: 43px; }
.algs p.l2 { padding-left: 68px; letter-spacing: -.08px; }
.algs .cat { height: 20px; padding-left: 33px; }
.cat .ar { margin-right: 12px; }
.algs .ar { margin-top: -2px; }
.algs .cur { background: #f0f0f0; }

footer { height: 35px; flex: none; display: flex; align-items: center; padding-left: 5px; font-size: 12.8px; white-space: nowrap; }
.loc, .inp { height: 28px; border: 1.500px solid #aaa; border-radius: 3px; background: #fff; display: flex; align-items: center; }
.loc { width: 250px; padding-left: 10px; color: #777; gap: 7px; font-size: 12.4px; letter-spacing: -.15px; }
.hint { margin-left: 10px; width: 673px; font-size: 13.3px; }
.w1 { width: 82px; } .c1 { width: 88px; padding-left: 11px; } .mo { margin: 0 17px 0 5px; }
.w2 { width: 37px; } .c2 { width: 94px; letter-spacing: .1px; } .c2 .a { margin-left: auto; width: 24px; height: 25px; border-left: 1px solid #aaa; background: #f3f3f3; padding-top: 9px; }
.lk { width: 18px; height: 20px; margin: 0 10px 0 14px; }
.w3 { width: 85px; } .c3 { width: 100px; padding-left: 6px; margin-right: 13px; } .w4 { width: 45px; }
.c3 + .cb { margin-left: -4px; } .w5 { margin-left: 7px; width: 74px; } .w6 { margin-left: 1px; width: 97px; letter-spacing: .15px; }
.spin { margin-left: auto; width: 19px; height: 25px; border-left: 1px solid #aaa; background: #f3f3f3; display: flex; flex-direction: column; justify-content: center; gap: 6px; align-items: center; }
.spin::before, .spin::after { content: ""; width: 9px; height: 5px; background: #555; clip-path: polygon(0 0, 100% 0, 50% 100%); }
.spin::before { transform: scaleY(-1); }
```
